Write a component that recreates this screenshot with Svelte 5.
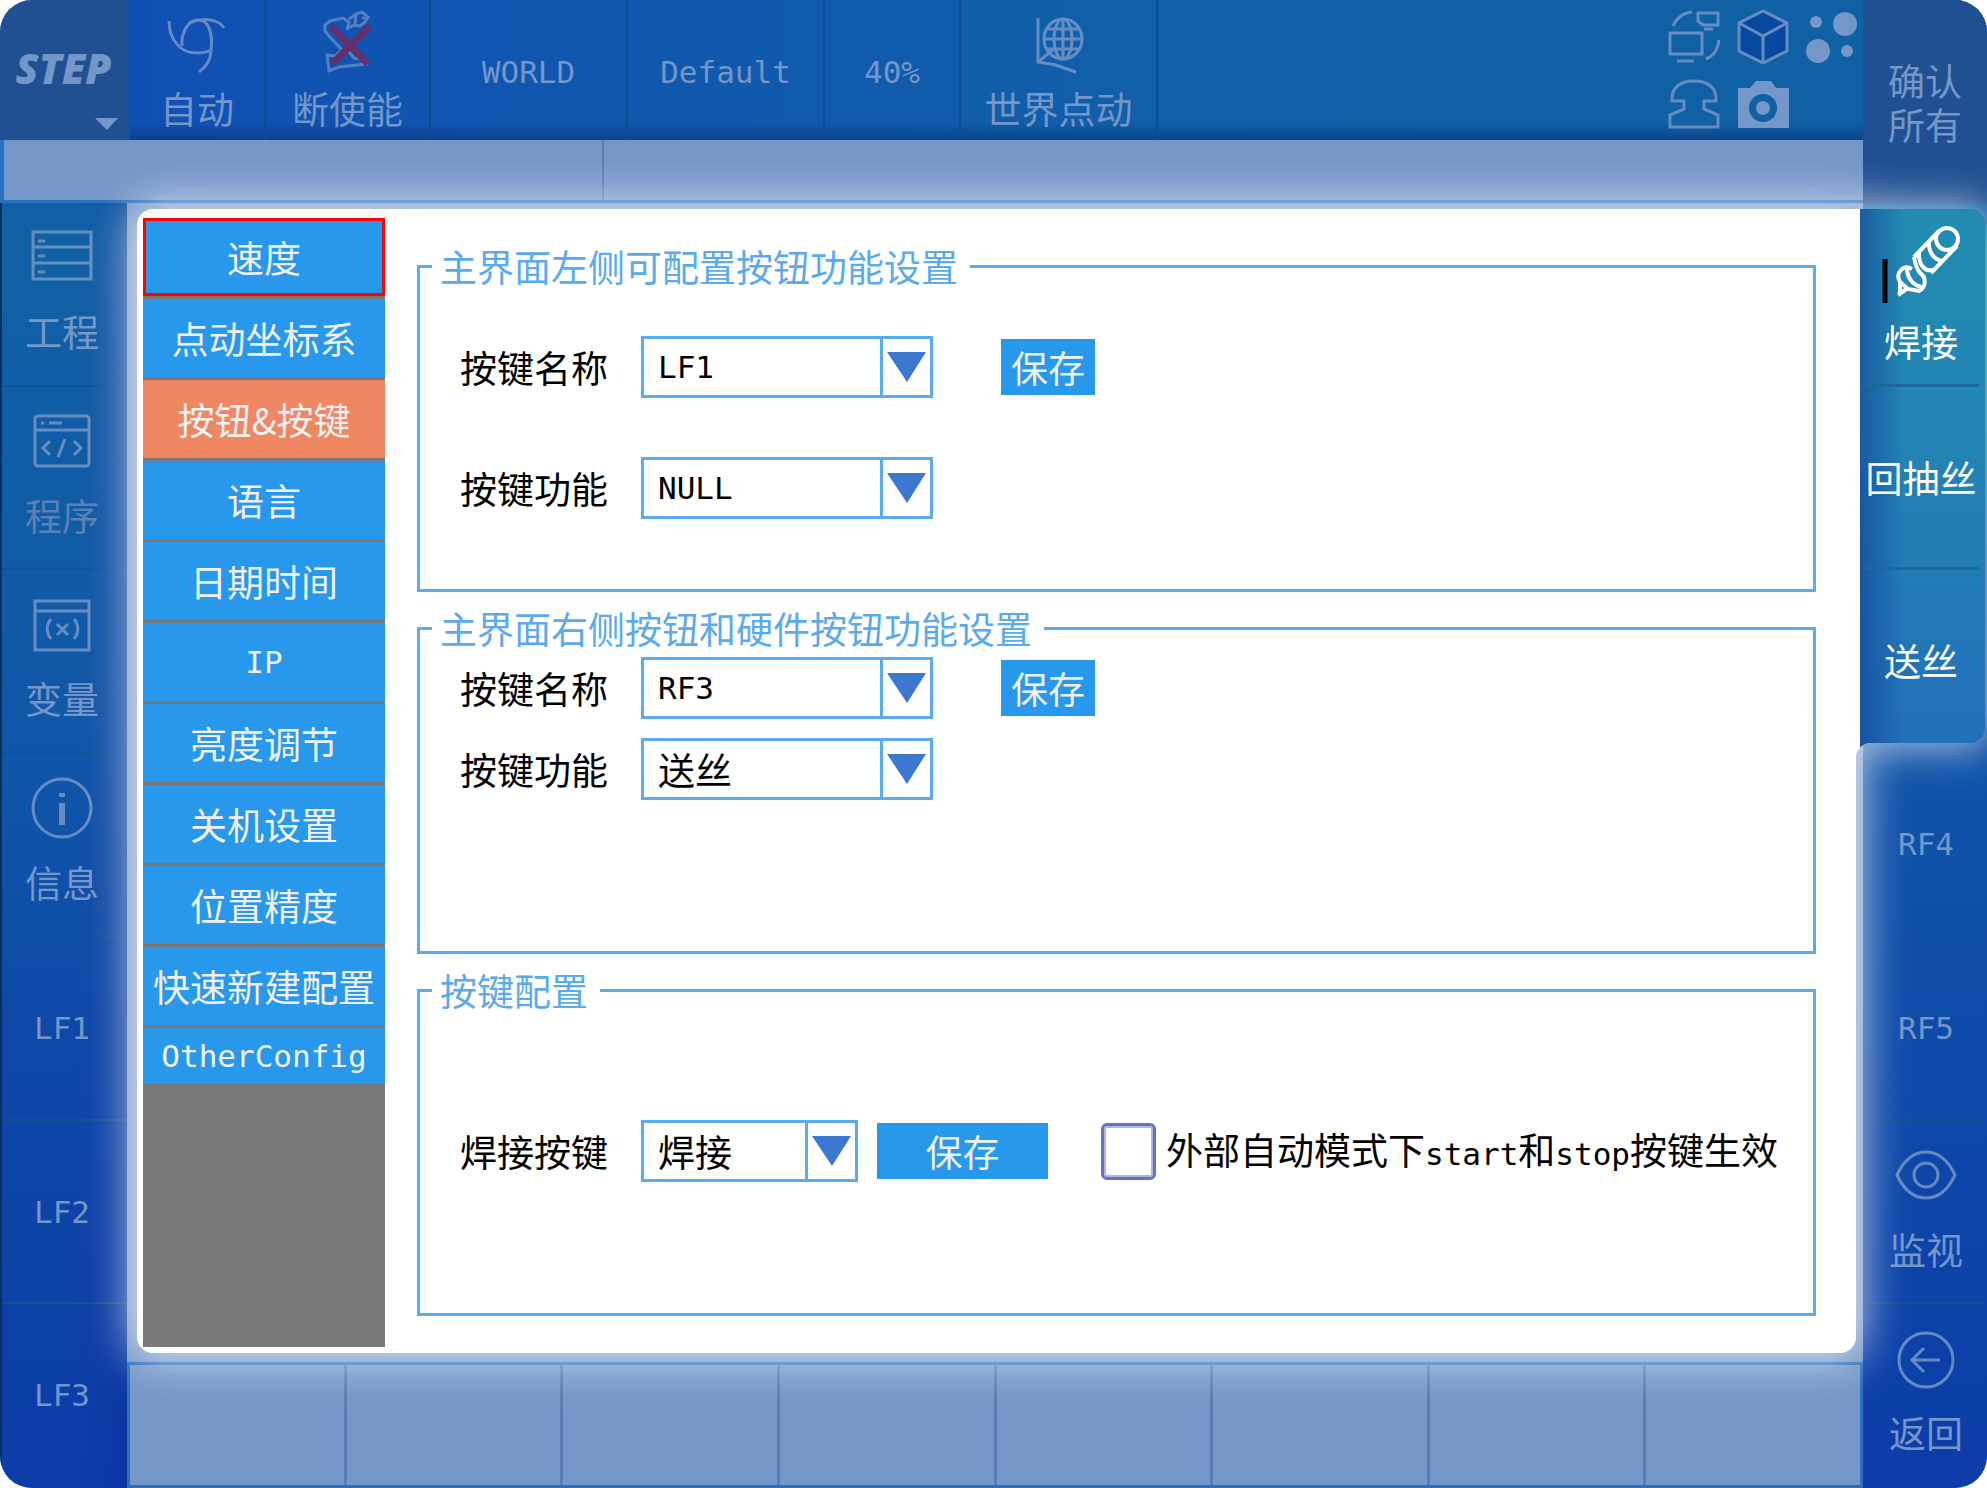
<script>
    let menu = [
        "速度",
        "点动坐标系",
        "按钮&按键",
        "语言",
        "日期时间",
        "IP",
        "亮度调节",
        "关机设置",
        "位置精度",
        "快速新建配置",
        "OtherConfig",
    ];
    let current = "按钮&按键";

    let status = [
        { text: "自动", icon: "auto", size: "w1" },
        { text: "断使能", icon: "robot", size: "w2" },
        { text: "WORLD", size: "w3" },
        { text: "Default", size: "w3" },
        { text: "40%", size: "w1" },
        { text: "世界点动", icon: "globe", size: "w3" },
    ];

    let leftKeys = [
        { text: "工程", icon: "project" },
        { text: "程序", icon: "program", off: true },
        { text: "变量", icon: "variable" },
        { text: "信息", icon: "info" },
        { text: "LF1" },
        { text: "LF2" },
        { text: "LF3" },
    ];
    let activeKeys = [
        { text: "焊接", icon: "weld" },
        { text: "回抽丝" },
        { text: "送丝" },
    ];
    let rightKeys = [
        { text: "RF4" },
        { text: "RF5" },
        { text: "监视", icon: "eye" },
        { text: "返回", icon: "back" },
    ];

    let leftName = "LF1";
    let leftFunc = "NULL";
    let rightName = "RF3";
    let rightFunc = "送丝";
    let weldKey = "焊接";
    let external = false;

    /**
     * @param {string} text
     */
    function isLatin(text) {
        return /^[\x20-\x7e]+$/.test(text);
    }
</script>

{#snippet icon(name)}
    {#if name === "auto"}
        <svg class="icon" width="60" height="56" viewBox="0 0 60 56">
            <path d="M2 3C2 22 14 35 29 35C37 35 42 33 44 32C46 17 42 2 32 2C21 2 14 14 15 28" />
            <path d="M22 5C36-1 52 1 57 10M44 32C44 41 39 49 32 54" />
        </svg>
    {:else if name === "robot"}
        <svg class="icon" width="56" height="64" viewBox="0 0 56 64">
            <g class="faint">
                <path d="M27 20L29 12L23 8L10 11L5 15V21L9 26L22 40L15 46L7 45L9 61L19 57L46 54L42 49L34 48L29 42V33L15 19" />
                <path d="M29 9L36 4L42 2L48 7L45 12L40 16L34 15L28 18M36 4L35 14M42 8H46" />
            </g>
            <path class="cross" d="M11 16L48 54M50 16L12 54" />
        </svg>
    {:else if name === "globe"}
        <svg class="icon" width="50" height="58" viewBox="0 0 50 58">
            <path d="M4 2V46L22 49L30 52L42 56M4 46L22 31" />
            <ellipse cx="29" cy="23" rx="19" ry="20" />
            <ellipse cx="29" cy="23" rx="9" ry="20" />
            <path d="M29 3V43M10 23H48M13 13H45M13 33H45" />
        </svg>
    {:else if name === "project"}
        <svg class="icon" width="62" height="62" viewBox="0 0 62 62">
            <rect x="2" y="6" width="58" height="47" />
            <path d="M2 21H60M2 37H60M7 15H14M7 30H14M7 46H14" />
        </svg>
    {:else if name === "program"}
        <svg class="icon" width="62" height="62" viewBox="0 0 62 62">
            <rect x="4" y="6" width="54" height="50" rx="3" />
            <path d="M4 20H58M10 13H13M18 13H31M19 31L12 38L19 45M43 31L50 38L43 45M34 29L27 47" />
        </svg>
    {:else if name === "variable"}
        <svg class="icon" width="62" height="62" viewBox="0 0 62 62">
            <rect x="4" y="8" width="54" height="49" />
            <path d="M4 18H58M20 26C15 32 15 40 20 46M43 26C48 32 48 40 43 46M26 31L37 42M37 31L26 42" />
        </svg>
    {:else if name === "info"}
        <svg class="icon" width="62" height="62" viewBox="0 0 62 62">
            <circle cx="31" cy="31" r="29" />
            <path class="thick" d="M31 16V20M31 26V48" />
        </svg>
    {:else if name === "weld"}
        <svg class="icon" width="80" height="78" viewBox="0 0 80 78">
            <path class="bar" d="M4 33V77" />
            <path d="M58 5L33 31M76 20L50 47" />
            <circle cx="66" cy="13" r="11" />
            <path d="M48 15C47 26 53 34 62 35M33 31L38 28C38 39 43 46 53 44" />
            <path d="M31 43C22 38 14 47 19 56L27 63L38 65C46 60 45 51 39 47C35 42 34 37 33 31M26 42C26 51 31 58 40 61M17 69L27 62M19 56V68" />
        </svg>
    {:else if name === "eye"}
        <svg class="icon" width="62" height="62" viewBox="0 0 62 62">
            <path d="M2 31C9 16 19 8 31 8S53 16 60 31C53 46 43 54 31 54S9 46 2 31Z" />
            <circle cx="31" cy="31" r="12" />
        </svg>
    {:else if name === "back"}
        <svg class="icon" width="62" height="62" viewBox="0 0 62 62">
            <circle cx="31" cy="33" r="27" />
            <path d="M45 33H18M29 21L17 33L29 45" />
        </svg>
    {/if}
{/snippet}

{#snippet arrow()}
    <span class="arrow">
        <svg width="39" height="30" viewBox="0 0 39 30"><path d="M0 0H39L20 30Z" /></svg>
    </span>
{/snippet}

{#snippet key(item)}
    <button class="key" class:off={item.off} class:plain={!item.icon}>
        {@render icon(item.icon)}
        <span class:latin={isLatin(item.text)}>{item.text}</span>
    </button>
{/snippet}

<div class="pendant">
    <button class="logo">
        <span>STEP</span>
        <svg width="23" height="12" viewBox="0 0 23 12"><path d="M0 0H23L12 12Z" /></svg>
    </button>

    <header class="toolbar">
        {#each status as item}
            <button class="cell {item.size}" class:plain={!item.icon}>
                {@render icon(item.icon)}
                <span class:latin={isLatin(item.text)}>{item.text}</span>
            </button>
        {/each}
        <div class="tray">
            <svg class="icon" width="52" height="54" viewBox="0 0 52 54">
                <rect x="2" y="23" width="32" height="21" />
                <path d="M9 51H26M5 16C9 7 15 3 24 2M51 30C50 40 46 46 38 49" />
                <path d="M30 3H50V15H35L30 11ZM36 19H45" />
            </svg>
            <svg class="icon" width="52" height="54" viewBox="0 0 52 54">
                <path class="cube" d="M26 1L50 13V41L26 53L2 41V13Z" />
                <path d="M2 13L26 26L50 13M26 26V53" />
            </svg>
            <svg class="solid" width="52" height="54" viewBox="0 0 52 54">
                <circle cx="10" cy="12" r="6" />
                <circle cx="39" cy="14" r="12" />
                <circle cx="12" cy="41" r="12" />
                <circle cx="41" cy="41" r="6" />
            </svg>
            <svg class="icon" width="52" height="54" viewBox="0 0 52 54">
                <path d="M4 23C3 9 13 3 26 3S49 9 48 23H36V31L50 37V49H2V37L16 31V23Z" />
            </svg>
            <svg class="solid" width="52" height="54" viewBox="0 0 52 54">
                <path fill-rule="evenodd" d="M1 10H13L19 3H34L39 10H52V50H1ZM26 16A14 14 0 1 0 26 44A14 14 0 1 0 26 16Z" />
                <circle cx="26" cy="30" r="7" />
            </svg>
        </div>
    </header>

    <div class="message">
        <div class="code"></div>
        <div class="detail"></div>
    </div>

    <nav class="keys left">
        {#each leftKeys as item}
            {@render key(item)}
        {/each}
    </nav>

    <main>
        <div class="dialog">
            <nav class="menu">
                {#each menu as item, i}
                    <button
                        class:focus={i === 0}
                        class:selected={item === current}
                        class:latin={isLatin(item)}
                        class:short={i === menu.length - 1}
                        on:click={() => (current = item)}
                    >
                        {item}
                    </button>
                {/each}
            </nav>
            <form class="settings" on:submit|preventDefault>
                <fieldset class="wide">
                    <legend>主界面左侧可配置按钮功能设置</legend>
                    <div class="row">
                        <label for="left-name">按键名称</label>
                        <div class="combo">
                            <select id="left-name" class="latin" bind:value={leftName}>
                                <option>LF1</option>
                                <option>LF2</option>
                                <option>LF3</option>
                            </select>
                            {@render arrow()}
                        </div>
                        <button class="save">保存</button>
                    </div>
                    <div class="row">
                        <label for="left-func">按键功能</label>
                        <div class="combo">
                            <select id="left-func" class="latin" bind:value={leftFunc}>
                                <option>NULL</option>
                            </select>
                            {@render arrow()}
                        </div>
                    </div>
                </fieldset>
                <fieldset class="tight">
                    <legend>主界面右侧按钮和硬件按钮功能设置</legend>
                    <div class="row">
                        <label for="right-name">按键名称</label>
                        <div class="combo">
                            <select id="right-name" class="latin" bind:value={rightName}>
                                <option>RF3</option>
                                <option>RF4</option>
                                <option>RF5</option>
                            </select>
                            {@render arrow()}
                        </div>
                        <button class="save">保存</button>
                    </div>
                    <div class="row">
                        <label for="right-func">按键功能</label>
                        <div class="combo">
                            <select id="right-func" bind:value={rightFunc}>
                                <option>送丝</option>
                                <option>回抽丝</option>
                            </select>
                            {@render arrow()}
                        </div>
                    </div>
                </fieldset>
                <fieldset class="single">
                    <legend>按键配置</legend>
                    <div class="row">
                        <label for="weld-key">焊接按键</label>
                        <div class="combo small">
                            <select id="weld-key" bind:value={weldKey}>
                                <option>焊接</option>
                            </select>
                            {@render arrow()}
                        </div>
                        <button class="save big">保存</button>
                        <input type="checkbox" id="external" bind:checked={external} />
                        <label class="check" for="external">外部自动模式下<span class="latin">start</span>和<span class="latin">stop</span>按键生效</label>
                    </div>
                </fieldset>
            </form>
        </div>
    </main>

    <footer>
        {#each Array(8) as _}
            <div class="slot"></div>
        {/each}
    </footer>

    <aside class="right">
        <button class="confirm">确认<br />所有</button>
        <div class="keys active">
            {#each activeKeys as item}
                {@render key(item)}
            {/each}
        </div>
        <div class="keys rest">
            {#each rightKeys as item}
                {@render key(item)}
            {/each}
        </div>
    </aside>
</div>

<style>
    :global(body) {
        background: #fff;
    }
    .pendant {
        box-sizing: border-box;
        min-height: 100vh;
        display: grid;
        grid-template-columns: 127px minmax(0, 1fr) 124px;
        grid-template-rows: 140px 63px 1fr 126px;
        border-radius: 32px;
        overflow: hidden;
        background: #7496c8;
        color: #7496c8;
        font-family: "Noto Sans CJK SC", sans-serif;
        font-size: 37px;
        line-height: 44px;
    }
    .pendant *,
    .pendant *::before,
    .pendant *::after {
        box-sizing: border-box;
    }
    button,
    select {
        margin: 0;
        padding: 0;
        border: 0;
        border-radius: 0;
        background: none;
        color: inherit;
        font: inherit;
        white-space: nowrap;
    }
    .latin {
        font-family: "DejaVu Sans Mono", monospace;
        font-size: 31px;
    }
    .icon {
        display: block;
        flex: none;
        fill: none;
        stroke: currentColor;
        stroke-width: 3;
    }
    .icon .faint {
        opacity: 0.8;
    }
    .icon .cross {
        stroke: #742860;
        stroke-width: 7;
    }
    .icon .cube {
        fill: #06459e;
    }
    .icon .thick {
        stroke-width: 6;
    }
    .icon .bar {
        stroke: #000;
        stroke-width: 5;
    }
    .solid {
        display: block;
        fill: currentColor;
    }

    /* top bar */
    .logo {
        grid-area: 1 / 1;
        display: flex;
        flex-direction: column;
        align-items: center;
        padding-top: 46px;
        background: #205092;
        font-family: "Open Sans", sans-serif;
        font-size: 42px;
        font-weight: 800;
        font-style: italic;
    }
    .logo svg {
        align-self: flex-end;
        margin: 28px 9px 0 0;
        fill: currentColor;
    }
    .toolbar {
        grid-area: 1 / 2;
        display: flex;
        border-left: 3px solid #0f559c;
        background:
            linear-gradient(to top, rgba(6, 52, 120, 0.6), transparent 18px),
            linear-gradient(to right, #1050b4, #1060a8 60%, #1060a4);
    }
    .cell {
        display: flex;
        flex-direction: column;
        align-items: center;
        justify-content: flex-end;
        gap: 12px;
        padding-bottom: 10px;
        border-right: 2px solid #0c4c90;
    }
    .cell.plain {
        justify-content: center;
        padding: 4px 0 0;
    }
    .cell .icon,
    .tray .icon {
        opacity: 0.85;
    }
    .w1 {
        width: 136px;
    }
    .w2 {
        width: 165px;
    }
    .w3 {
        width: 197px;
    }
    .tray {
        display: grid;
        grid-template-columns: repeat(3, 52px);
        grid-auto-rows: 54px;
        gap: 14px 17px;
        margin-left: auto;
        padding: 10px 5px 0 0;
    }

    .message {
        grid-area: 2 / 1 / 3 / 3;
        display: grid;
        grid-template-columns: 600px 1fr;
        border: solid #2870c0;
        border-width: 0 0 3px 4px;
    }
    .code {
        border-right: 2px solid #5a7cb0;
    }

    /* key columns */
    .keys {
        display: grid;
        grid-auto-rows: 1fr;
    }
    .left {
        grid-area: 3 / 1 / 5 / 2;
        border-left: 2px solid #04305c;
        background:
            linear-gradient(to right, transparent 60%, rgba(10, 40, 150, 0.3)),
            linear-gradient(#1062a4, #1058a8 40%, #0e48a8 65%, #0c3ca8);
    }
    .right {
        grid-area: 1 / 3 / 5 / 4;
        display: grid;
        grid-template-rows: 203px 3fr 4fr;
        background: linear-gradient(#1062a4, #1054a8 50%, #0e48a8 75%, #0c3ca8);
    }
    .key {
        display: flex;
        flex-direction: column;
        align-items: center;
        gap: 21px;
        padding: 23px 0 10px;
        border-bottom: 2px solid #0e5298;
    }
    .key:last-child {
        border-bottom-color: transparent;
    }
    .key .icon {
        opacity: 0.85;
    }
    .key.plain {
        justify-content: center;
        padding: 0;
    }
    .left .key,
    .left .key.plain {
        padding-right: 5px;
    }
    .off span {
        color: #5c80b4;
    }
    .confirm {
        background: #205092;
    }
    .active {
        position: relative;
        z-index: 2;
        color: #fff;
    }
    .active::before {
        content: "";
        position: absolute;
        z-index: -1;
        inset: 6px 2px 11px -3px;
        border-radius: 0 16px 16px 0;
        background:
            linear-gradient(to right, rgba(20, 60, 150, 0.6), transparent 44px),
            linear-gradient(#228cb0, #2284b4 45%, #2270b8);
        box-shadow:
            -4px 0 0 #fff,
            0 0 40px 4px rgba(255, 255, 255, 0.65);
    }
    /* inner corner where the dialog meets the lower keys */
    .active::after {
        content: "";
        position: absolute;
        left: -7px;
        bottom: -5px;
        width: 16px;
        height: 16px;
        background: linear-gradient(to right, #fff 4px, #1c50a4 4px);
        -webkit-mask: radial-gradient(circle at 100% 100%, transparent 16px, #000 17px);
        mask: radial-gradient(circle at 100% 100%, transparent 16px, #000 17px);
    }
    .active .key {
        gap: 15px;
        margin: 0 8px 0 0;
        border-bottom: 3px solid #1c689c;
    }
    .active .key:last-child {
        border-bottom-color: transparent;
    }
    .active .icon {
        opacity: 1;
        stroke-width: 4;
    }
    .rest .key {
        margin: 0 4px 0 6px;
    }

    main {
        grid-area: 3 / 2;
        display: flex;
        padding: 6px 7px 9px 10px;
    }
    .dialog {
        position: relative;
        z-index: 1;
        flex: 1;
        min-width: 0;
        display: flex;
        border-radius: 16px 0 16px 16px;
        background: #fff;
        box-shadow: 0 0 48px 4px rgba(255, 255, 255, 0.8);
    }
    .menu {
        width: 242px;
        margin: 9px 0 6px 6px;
        display: flex;
        flex-direction: column;
        gap: 3px;
        background: #787878;
    }
    .menu button {
        height: 78px;
        background: #2898ec;
        color: #f0f0f0;
    }
    .menu .focus {
        border: 3px solid #f00;
    }
    .menu .selected {
        background: #f08763;
    }
    .menu .short {
        height: 56px;
    }
    .settings {
        flex: 1;
        min-width: 0;
        display: flex;
        flex-direction: column;
        gap: 14px;
        padding: 35px 40px 37px 32px;
        color: #000;
    }
    fieldset {
        flex: 1 1 0;
        min-width: 0;
        margin: 0;
        padding: 0 0 20px 40px;
        border: 3px solid #5aaaee;
    }
    legend {
        margin-left: -28px;
        padding: 0 12px 0 8px;
        color: #5aaaee;
    }
    .row {
        display: flex;
        align-items: center;
    }
    .row label {
        width: 181px;
    }
    .wide .row {
        margin-top: 48px;
    }
    .wide .row + .row {
        margin-top: 59px;
    }
    .tight .row {
        margin-top: 7px;
    }
    .tight .row + .row {
        margin-top: 19px;
    }
    .single .row {
        margin-top: 108px;
    }
    .combo {
        position: relative;
        width: 292px;
        height: 62px;
    }
    .combo select {
        appearance: none;
        width: 100%;
        height: 100%;
        padding: 0 52px 0 14px;
        border: 3px solid #5aaaee;
        background: #fff;
    }
    .arrow {
        position: absolute;
        inset: 3px 3px 3px auto;
        width: 50px;
        display: flex;
        align-items: center;
        justify-content: center;
        border-left: 3px solid #5aaaee;
        pointer-events: none;
    }
    .arrow svg {
        fill: #3c78d0;
    }
    .save {
        width: 94px;
        height: 56px;
        margin-left: 68px;
        background: #2898ec;
        color: #f0f0f0;
    }
    .small {
        width: 217px;
    }
    .big {
        width: 171px;
        margin-left: 19px;
    }
    input {
        appearance: none;
        width: 55px;
        height: 57px;
        margin: 0 10px 0 53px;
        border: 3px solid #6472c0;
        border-radius: 6px;
        background: #fff;
        box-shadow: inset 0 0 0 2px #b0b6e0;
    }
    input:checked {
        background: #6472c0;
    }
    .row .check {
        width: auto;
        white-space: nowrap;
    }

    footer {
        grid-area: 4 / 2;
        display: flex;
        border: 3px solid #2870c0;
    }
    .slot {
        flex: 1;
    }
    .slot + .slot {
        border-left: 3px solid #5a7cb0;
    }
</style>
